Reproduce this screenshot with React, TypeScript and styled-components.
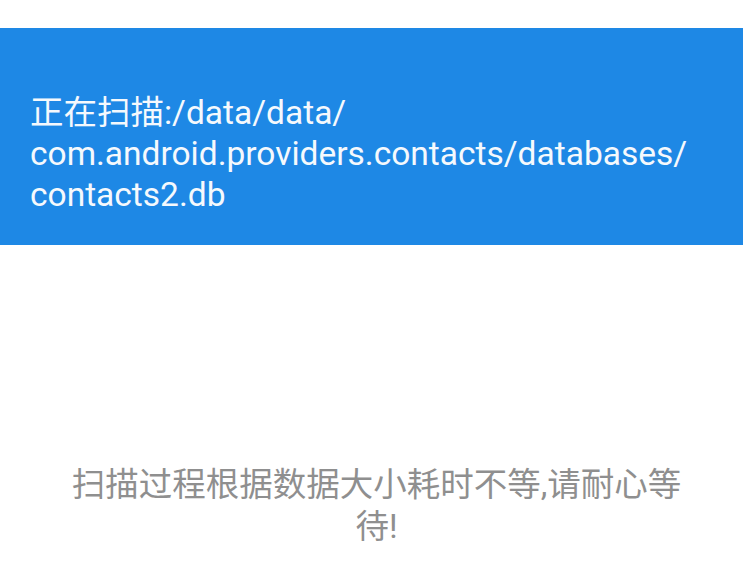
import styled, { createGlobalStyle } from "styled-components";

const GlobalStyle = createGlobalStyle`
  html, body {
    margin: 0;
    padding: 0;
    background: #ffffff;
  }
  body {
    font-family: Roboto, "Noto Sans CJK SC", sans-serif;
  }
`;

function App() {
  return (
    <Page>
      <GlobalStyle />
      <StatusGap />
      <ScanBar>
        <PathLine>正在扫描:/data/data/</PathLine>
        <PathLine>com.android.providers.contacts/databases/</PathLine>
        <PathLine>contacts2.db</PathLine>
      </ScanBar>
      <Body>
        <Hint>扫描过程根据数据大小耗时不等,请耐心等待!</Hint>
      </Body>
    </Page>
  );
}

const Page = styled.div`
  display: flex;
  flex-direction: column;
  width: 743px;
  height: 580px;
  overflow: hidden;
`;

const StatusGap = styled.div`
  height: 28px;
  background: #ffffff;
`;

const ScanBar = styled.div`
  display: flex;
  flex-direction: column;
  height: 217px;
  box-sizing: border-box;
  padding: 64px 30px 0 30px;
  background: #1e88e5;
  color: #f5f9fd;
`;

const PathLine = styled.div`
  font-size: 33.5px;
  line-height: 41px;
  white-space: nowrap;
`;

const Body = styled.div`
  flex: 1;
  display: flex;
  justify-content: center;
  padding: 219px 52px 0 62px;
`;

const Hint = styled.div`
  font-size: 33.5px;
  line-height: 42px;
  color: #8f8f8f;
  text-align: center;
`;

export default App;
